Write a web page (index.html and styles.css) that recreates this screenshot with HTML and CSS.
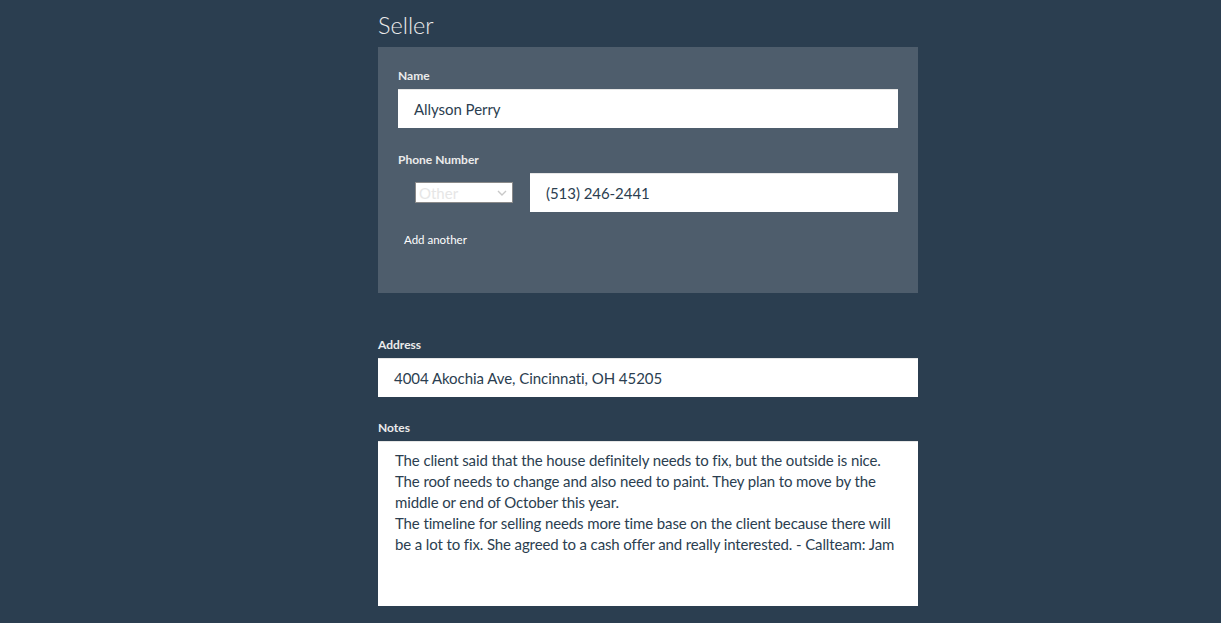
FILE: index.html
```html
<!DOCTYPE html>
<html lang="en">
<head>
<meta charset="utf-8">
<title>Seller</title>
<link rel="stylesheet" href="styles.css">
</head>
<body>
<main class="page">
  <h2 class="title">Seller</h2>
  <section class="card">
    <div class="group">
      <div class="label">Name</div>
      <div class="field">Allyson Perry</div>
    </div>
    <div class="group">
      <div class="label">Phone Number</div>
      <div class="phone-row">
        <div class="select">
          <span>Other</span>
          <svg class="chev" width="10" height="6" viewBox="0 0 10 6"><path d="M1 1 L5 5 L9 1" fill="none" stroke="#c8c8c8" stroke-width="1.4"/></svg>
        </div>
        <div class="field grow">(513) 246-2441</div>
      </div>
      <div class="add">Add another</div>
    </div>
  </section>
  <div class="group outer">
    <div class="label">Address</div>
    <div class="field">4004 Akochia Ave, Cincinnati, OH 45205</div>
  </div>
  <div class="group notes-group">
    <div class="label">Notes</div>
    <div class="field notes">
      <div>The client said that the house definitely needs to fix, but the outside is nice.</div>
      <div>The roof needs to change and also need to paint. They plan to move by the</div>
      <div>middle or end of October this year.</div>
      <div>The timeline for selling needs more time base on the client because there will</div>
      <div>be a lot to fix. She agreed to a cash offer and really interested. - Callteam: Jam</div>
    </div>
  </div>
</main>
</body>
</html>
```
FILE: styles.css
```css
html, body {
  margin: 0;
  padding: 0;
  background: #2b3e50;
  font-family: Lato, "Liberation Sans", sans-serif;
  color: #ebebeb;
  height: 100%;
  overflow: hidden;
}
.page {
  width: 540px;
  margin-left: 378px;
  padding-top: 11px;
}
.title {
  margin: 0 0 7px;
  font-size: 23.5px;
  font-weight: 300;
  line-height: 29px;
  color: #ebebeb;
}
.card {
  background: #4e5d6c;
  padding: 20px 20px 45px;
}
.label {
  font-size: 12px;
  font-weight: 700;
  line-height: 17px;
  color: #ebebeb;
  margin-bottom: 5px;
}
.group + .group {
  margin-top: 23px;
}
.group.outer {
  margin-top: 43px;
}
.group.notes-group {
  margin-top: 22px;
}
.field {
  background: #fff;
  height: 39px;
  box-sizing: border-box;
  padding: 0 16px;
  display: flex;
  align-items: center;
  font-size: 15px;
  letter-spacing: -0.05px;
  color: #2b3e50;
  border-top: 1px solid #e6e6e6;
  white-space: nowrap;
}
.phone-row {
  display: flex;
  align-items: center;
  gap: 17px;
  padding-left: 17px;
}
.select {
  width: 98px;
  height: 21px;
  box-sizing: border-box;
  background: #fff;
  border: 1px solid #8a8a8a;
  display: flex;
  align-items: center;
  justify-content: space-between;
  padding: 0 5px 0 3px;
  font-size: 15px;
  color: #e6e6e6;
}
.chev {
  display: block;
}
.grow {
  flex: 1;
}
.add {
  font-size: 11.5px;
  line-height: 17px;
  margin-top: 19px;
  padding-left: 6px;
  color: #fff;
}
.notes {
  height: 165px;
  display: block;
  padding: 8px 16px 8px 17px;
  line-height: 21px;
  letter-spacing: -0.12px;
}
```
